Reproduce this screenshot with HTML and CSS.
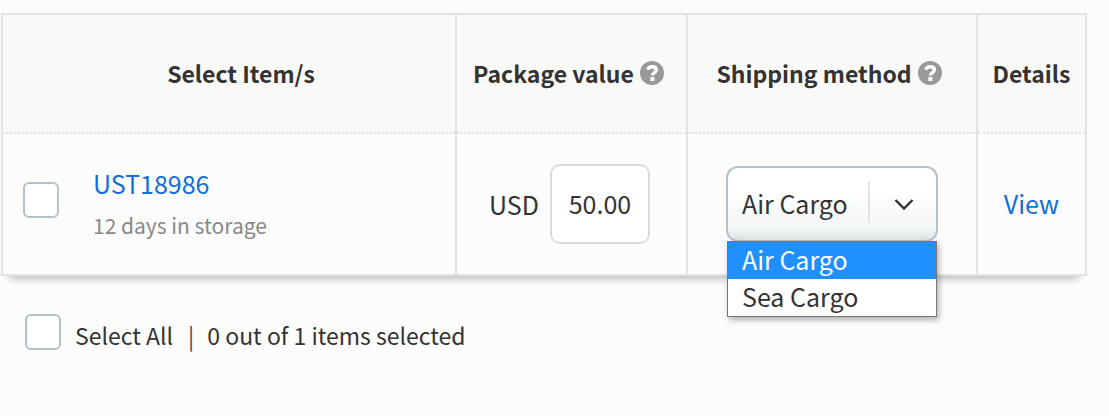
FILE: index.html
```html
<!DOCTYPE html>
<html lang="en">
<head>
    <meta charset="UTF-8">
    <meta name="viewport" content="width=device-width, initial-scale=1.0">
    <title>Packages in storage</title>
    <link rel="stylesheet" href="styles.css">
</head>
<body>

    <form class="packages">
        <table class="package-table">
            <colgroup>
                <col class="col-item">
                <col class="col-value">
                <col class="col-method">
                <col class="col-details">
            </colgroup>
            <thead>
                <tr>
                    <th scope="col" class="item-heading">Select Item/s</th>
                    <th scope="col">
                        <div class="heading">
                            <span id="value-label">Package value</span>
                            <button type="button" class="help" aria-label="About package value">
                                <svg viewBox="0 0 24 24" aria-hidden="true">
                                    <circle cx="12" cy="12" r="12" fill="#999"/>
                                    <path d="M7.6 8.6C8.5 6.6 10 5.7 12.2 5.7c2.6 0 4.2 1.2 4.2 3.2 0 2.8-4 2.6-4 5.6" fill="none" stroke="#fff" stroke-width="3.4"/>
                                    <path d="M10.4 16h4v4h-4z" fill="#fff"/>
                                </svg>
                            </button>
                        </div>
                    </th>
                    <th scope="col">
                        <div class="heading">
                            <span id="method-label">Shipping method</span>
                            <button type="button" class="help" aria-label="About shipping method">
                                <svg viewBox="0 0 24 24" aria-hidden="true">
                                    <circle cx="12" cy="12" r="12" fill="#999"/>
                                    <path d="M7.6 8.6C8.5 6.6 10 5.7 12.2 5.7c2.6 0 4.2 1.2 4.2 3.2 0 2.8-4 2.6-4 5.6" fill="none" stroke="#fff" stroke-width="3.4"/>
                                    <path d="M10.4 16h4v4h-4z" fill="#fff"/>
                                </svg>
                            </button>
                        </div>
                    </th>
                    <th scope="col">Details</th>
                </tr>
            </thead>
            <tbody>
                <tr>
                    <td>
                        <div class="item">
                            <input type="checkbox" class="check" id="item-18986" aria-labelledby="item-name">
                            <div class="item-text">
                                <a href="#item" class="link" id="item-name">UST18986</a>
                                <label class="item-age" for="item-18986">12 days in storage</label>
                            </div>
                        </div>
                    </td>
                    <td>
                        <div class="value">
                            <label for="package-value">USD</label>
                            <input type="text" class="value-input" id="package-value" value="50.00">
                        </div>
                    </td>
                    <td>
                        <div class="method">
                            <select class="method-select" aria-labelledby="method-label">
                                <option selected>Air Cargo</option>
                                <option>Sea Cargo</option>
                            </select>
                            <svg class="method-arrow" viewBox="0 0 70 40" aria-hidden="true">
                                <path d="M1 0v40" stroke="#e3e3e3" stroke-width="2"/>
                                <path d="M27.5 18l8.5 8.5 8.5-8.5" fill="none" stroke="#333" stroke-width="2.4"/>
                            </svg>
                            <!-- Open list -->
                            <ul class="method-list" role="listbox" aria-labelledby="method-label">
                                <li class="method-option active" role="option" aria-selected="true">Air Cargo</li>
                                <li class="method-option" role="option" aria-selected="false">Sea Cargo</li>
                            </ul>
                        </div>
                    </td>
                    <td class="details"><a href="#details" class="link">View</a></td>
                </tr>
            </tbody>
        </table>

        <div class="summary">
            <input type="checkbox" class="check" id="select-all">
            <label for="select-all">Select All</label>
            <span class="summary-line">|</span>
            <span>0 out of 1 items selected</span>
        </div>
    </form>

</body>
</html>
```
FILE: styles.css
```css
* {
    box-sizing: border-box;
}

body {
    margin: 0;
    background: #fcfcfc;
    color: #333;
    font-family: "Noto Sans CJK SC", "Open Sans", sans-serif;
    font-size: 23px;
    line-height: 36px;
}

input,
select,
button {
    margin: 0;
    font: inherit;
    color: inherit;
}

.packages {
    padding: 13px 22px 0 1px;
}

/* Table */
.package-table {
    width: 100%;
    table-layout: fixed;
    border-collapse: collapse;
    box-shadow: 0 10px 8px -8px rgba(0, 0, 0, 0.3);
}

.col-value {
    width: 231px;
}

.col-method {
    width: 290px;
}

.col-details {
    width: 109px;
}

.package-table th,
.package-table td {
    border: 2px solid #e3e3e3;
    padding: 0;
}

.package-table th {
    height: 119px;
    padding-bottom: 2px;
    border-bottom: 2px dotted #e3e3e3;
    background: #f9f9f7;
    font-weight: bold;
    text-align: center;
}

.package-table .item-heading {
    padding-left: 24px;
}

.package-table td {
    height: 142px;
    border-top: 2px dotted #e3e3e3;
    font-size: 25px;
}

.heading {
    display: flex;
    justify-content: center;
    align-items: center;
    gap: 6px;
    padding-right: 6px;
}

.help {
    width: 24px;
    height: 24px;
    padding: 0;
    border: 0;
    background: none;
}

.help svg {
    display: block;
}

.link {
    color: #0f6fd8;
    text-decoration: none;
}

/* Item */
.item {
    display: flex;
    align-items: flex-start;
    gap: 34px;
    padding-left: 20px;
}

.item .check {
    margin-top: 17px;
}

.item-text {
    display: flex;
    flex-direction: column;
    gap: 6px;
}

.item-age {
    color: #888;
    font-size: 21px;
}

.check {
    appearance: none;
    width: 36px;
    height: 36px;
    border: 2px solid #b5c1c9;
    border-radius: 6px;
    background: #fff;
}

/* Package value */
.value {
    display: flex;
    justify-content: center;
    align-items: center;
    gap: 11px;
    padding-right: 4px;
}

.value-input {
    width: 100px;
    height: 80px;
    padding: 0 0 2px;
    border: 2px solid #ddddd8;
    border-radius: 10px;
    background: #fff;
    text-align: center;
}

/* Shipping method */
.method {
    position: relative;
    width: 212px;
    margin: 0 auto;
}

.method-select {
    display: block;
    appearance: none;
    width: 100%;
    height: 76px;
    padding: 0 14px 2px;
    border: 2px solid #b5c1c9;
    border-radius: 12px;
    background: linear-gradient(#fff 35%, #f1f4f6 85%, #dfe3e3);
}

.method-arrow {
    position: absolute;
    top: 16px;
    right: 0;
    width: 70px;
    height: 40px;
    pointer-events: none;
}

.method-list {
    position: absolute;
    top: 75px;
    left: 1px;
    right: 1px;
    margin: 0;
    padding: 0;
    border: 1px solid #777;
    background: #fff;
    box-shadow: 2px 3px 6px rgba(0, 0, 0, 0.3);
    line-height: 34px;
    list-style: none;
}

.method-option {
    height: 37px;
    padding: 0 14px;
}

.method-option.active {
    background: #1e90ff;
    color: #fff;
}

.package-table .details {
    padding-bottom: 2px;
    text-align: center;
}

/* Summary */
.summary {
    display: flex;
    align-items: flex-start;
    gap: 13px;
    padding: 38px 0 0 24px;
    line-height: 42px;
}

.summary label {
    padding: 0 2px 0 1px;
}

.summary-line {
    color: #6b3a3a;
}
```
